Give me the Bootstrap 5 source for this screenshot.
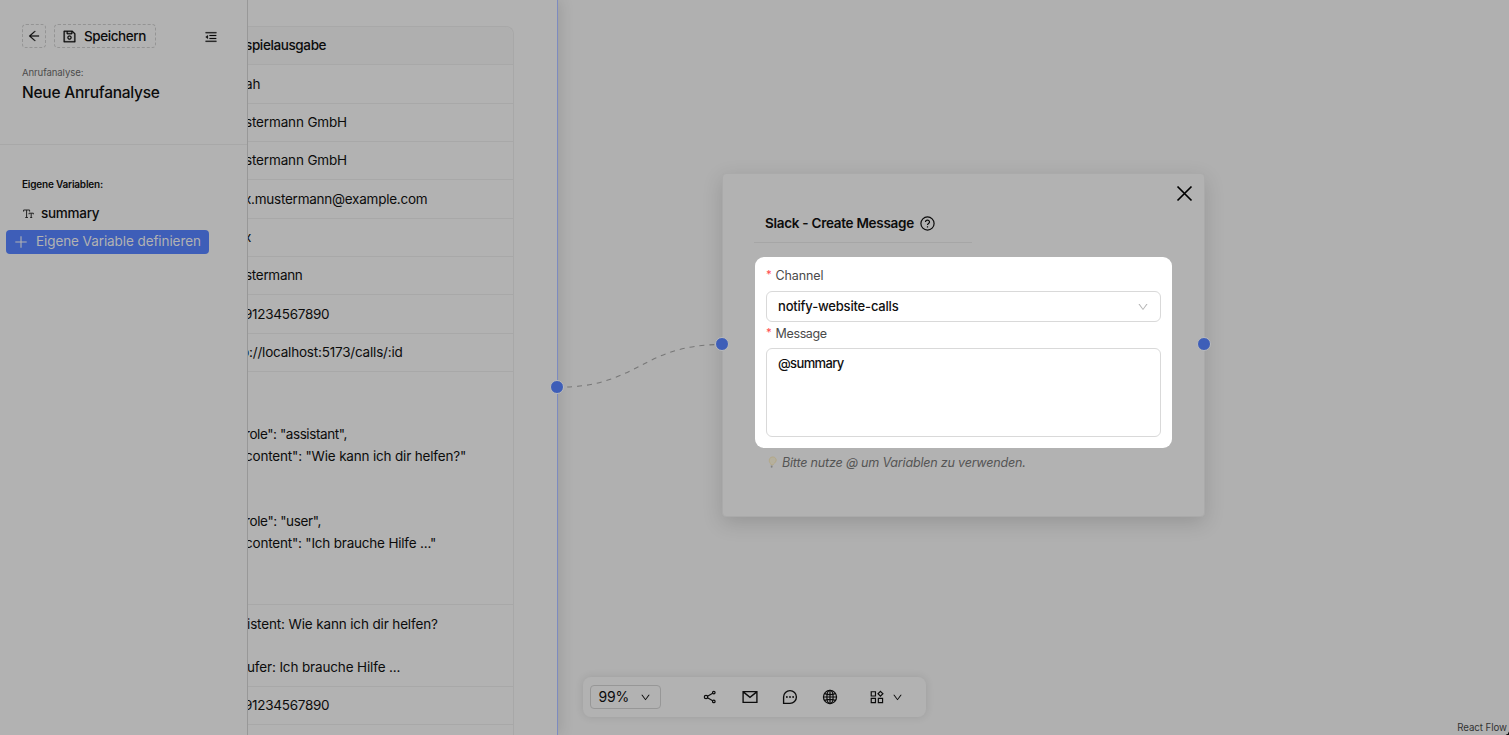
<!DOCTYPE html>
<html lang="de">
<head>
<meta charset="utf-8">
<meta name="viewport" content="width=device-width, initial-scale=1">
<title>Neue Anrufanalyse</title>
<link href="https://cdn.jsdelivr.net/npm/bootstrap@5.3.0/dist/css/bootstrap.min.css" rel="stylesheet">
<style>
body{font-family:Inter,"Open Sans",sans-serif;font-size:13.5px;line-height:21.65px;letter-spacing:-.2px;color:#0c0c0c;background:#b0b0b0;height:735px}
svg{display:block;flex:none}
.ic{fill:currentColor}
.ln{fill:none;stroke:currentColor;stroke-width:86}
/* sidebar */
.side{width:248px;background:#b2b2b2;border-right:1px solid #989898;z-index:5}
.side-top{height:145px;border-bottom:1px solid #a8a8a8;padding:24px 0 0 22px}
.btn-dash{border:1px dashed #949494;border-radius:4px;height:24px;color:#0c0c0c;font-size:13.5px;line-height:22px}
.btn-save{width:102px;padding-left:7px!important;gap:7px;font-weight:500;letter-spacing:-.42px}
.lbl-sm{font-size:9.6px;line-height:14px;color:#4c4c4c;letter-spacing:-.1px;margin-top:17.6px}
.ttl{font-size:15.5px;line-height:24px;font-weight:500;letter-spacing:-.25px;margin-top:1px}
.vars{padding:32px 0 0 6px}
.vars-h{font-size:10px;font-weight:600;line-height:14px;padding-left:16px}
.var-row{padding:12px 0 0 17px;gap:7px;font-weight:500;letter-spacing:-.28px}
.btn-def{background:#3e5eb8;color:#b2b2b2;border:0;border-radius:4px;width:203px;height:24px;font-size:13.5px;line-height:25px;letter-spacing:-.08px;padding:0 0 0 8px;margin-top:5px;gap:8px}
/* canvas */
.node-vars{left:-20px;top:0;width:330px;height:735px;background:#b2b2b2;border-right:1px solid #7d8bc0;box-shadow:2px 0 14px rgba(0,0,0,.12);padding:26px 43.5px 0 13px}
.tbl{border:1px solid #a8a8a8;border-radius:0 8px 0 0;border-left:0;border-bottom:0;height:709px}
.tbl>div{border-bottom:1px solid #a8a8a8;padding:8.4px 0 0 3px;white-space:pre;height:38.37px}
.tbl>.hd{background:#afafaf;font-weight:500;letter-spacing:-.38px;border-radius:0 8px 0 0;height:38.2px}
.tbl>.p4{padding-left:4px}
.tbl>.json{height:233px;padding-top:8.9px}.tbl>.talk{height:82px;padding:9px 0 0 6px;letter-spacing:-.14px}
.node-slack{left:474px;top:173px;width:482.5px;height:344px;background:#b2b2b2;border:1px solid #aaa;border-radius:4px;box-shadow:0 6px 20px rgba(0,0,0,.15);padding:39.500px 32px 0 32px}
.node-h{width:218px;height:29px;border-bottom:1px solid #a6a6a6;padding:0 0 8px 11px;margin-left:-1px;font-weight:600;font-size:13.5px;letter-spacing:-.28px}
.spot{background:#fff;border-radius:9px;height:191px;width:417px;margin-top:14.5px;padding:9px 11px 0}
.f-lbl{font-size:12.5px;line-height:20px;color:#4a4a4a;height:20px;letter-spacing:-.1px}
.f-lbl i{color:#ff4d4f;font-style:normal;font-size:11px;width:9.5px;display:inline-block;font-weight:500;line-height:10px;vertical-align:2px}
.inp{border:1px solid #d9d9d9;border-radius:6px;color:#0f0f0f;font-weight:500;font-size:13px;letter-spacing:-.19px;padding:0 11px}
.hint{font-size:12.6px;font-style:italic;color:#555;letter-spacing:-.22px;margin-top:4px;padding-left:12.5px;gap:5.5px}
.xbtn{right:11px;top:11px}
.dot{width:14px;height:14px;border-radius:50%;background:#3e5eb8;border:1px solid #bcbcbc}
.tools{left:334.5px;top:677px;width:343px;height:40px;border-radius:8px;background:#b2b2b2;box-shadow:0 0 8px rgba(0,0,0,.11);padding:0 24px 0 7.5px}
.zoomsel{width:71px;height:24px;border:1px solid #979797;border-radius:4px;padding:0 9px 0 7.5px;font-size:14px;flex:none}
.sep{width:1px;height:12px;background:#a3a3a3;margin:0 25.500px 0 16px}
.flow{right:2px;bottom:0;font-size:9.7px;line-height:15px;letter-spacing:-.05px;color:#333}
.cor{width:4px;height:4px;bottom:0}
</style>
</head>
<body class="d-flex overflow-hidden position-relative">
<svg width="0" height="0" class="position-absolute"><defs>
<symbol id="down" viewBox="0 0 1024 1024"><path d="M884 256h-75c-5.1 0-9.9 2.5-12.9 6.6L512 654.2 227.9 262.6c-3-4.1-7.8-6.6-12.9-6.6h-75c-6.5 0-10.3 7.4-6.5 12.7l352.6 486.1c12.8 17.6 39 17.6 51.7 0l352.6-486.1c3.9-5.3.1-12.7-6.4-12.7z"/></symbol>
</defs></svg>

<aside class="side flex-shrink-0 position-relative">
  <div class="side-top">
    <div class="d-flex align-items-center">
      <button class="btn btn-dash p-0 d-flex align-items-center justify-content-center" style="width:24px" aria-label="Zurück"><svg class="ic" width="14" height="14" viewBox="0 0 1024 1024"><path stroke="currentColor" stroke-width="14" d="M872 474H286.9l350.2-304c5.6-4.9 2.2-14-5.2-14h-88.5c-3.9 0-7.6 1.4-10.5 3.9L155 487.8a31.96 31.96 0 000 48.3L535.1 866c1.5 1.3 3.3 2 5.2 2h91.5c7.4 0 10.8-9.2 5.2-14L286.9 550H872c4.4 0 8-3.6 8-8v-60c0-4.4-3.6-8-8-8z"/></svg></button>
      <button class="btn btn-dash btn-save p-0 d-flex align-items-center ms-2"><svg class="ic" width="15" height="15" viewBox="0 0 1024 1024"><path stroke="currentColor" stroke-width="20" d="M893.3 293.3L730.7 130.7c-7.5-7.5-16.7-13-26.7-16V112H144c-17.7 0-32 14.3-32 32v736c0 17.7 14.3 32 32 32h736c17.7 0 32-14.3 32-32V338.5c0-17-6.7-33.2-18.7-45.2zM384 184h256v104H384V184zm456 656H184V184h136v136c0 17.7 14.3 32 32 32h320c17.7 0 32-14.3 32-32V205.8l136 136V840zM512 442c-79.5 0-144 64.5-144 144s64.5 144 144 144 144-64.5 144-144-64.5-144-144-144zm0 224c-44.2 0-80-35.8-80-80s35.8-80 80-80 80 35.8 80 80-35.8 80-80 80z"/></svg>Speichern</button>
      <svg class="ic" style="margin:1px 0 0 48px" width="14" height="14" viewBox="0 0 1024 1024"><path stroke="currentColor" stroke-width="14" d="M408 442h480c4.4 0 8-3.6 8-8v-56c0-4.4-3.6-8-8-8H408c-4.4 0-8 3.6-8 8v56c0 4.4 3.6 8 8 8zm-8 204c0 4.4 3.6 8 8 8h480c4.4 0 8-3.6 8-8v-56c0-4.4-3.6-8-8-8H408c-4.4 0-8 3.6-8 8v56zm504-486H120c-4.4 0-8 3.6-8 8v56c0 4.4 3.6 8 8 8h784c4.4 0 8-3.6 8-8v-56c0-4.4-3.6-8-8-8zm0 632H120c-4.4 0-8 3.6-8 8v56c0 4.4 3.6 8 8 8h784c4.4 0 8-3.6 8-8v-56c0-4.4-3.6-8-8-8zM115.4 518.9L271.7 642c5.8 4.6 14.4.5 14.4-6.9V388.9c0-7.4-8.5-11.5-14.4-6.9L115.4 505.1a8.74 8.74 0 000 13.8z"/></svg>
    </div>
    <div class="lbl-sm">Anrufanalyse:</div>
    <div class="ttl">Neue Anrufanalyse</div>
  </div>
  <div class="vars">
    <div class="vars-h">Eigene Variablen:</div>
    <div class="var-row d-flex align-items-center">
      <svg width="11" height="10" viewBox="0 0 11 10" fill="none" stroke="#222" stroke-width="1"><path d="M.6 2.6V1h6v1.6M3.6 1v7.4M2.3 8.5h2.6M6 5.3V4.2h4.4v1.1M8.2 4.2v4.2M7.2 8.5h2"/></svg>summary
    </div>
    <button class="btn btn-def d-flex align-items-center"><svg width="14" height="14" viewBox="0 0 14 14" stroke="currentColor" stroke-width="1.1"><path d="M7 1.3v11.4M1.3 7h11.4"/></svg>Eigene Variable definieren</button>
  </div>
</aside>

<main class="flex-grow-1 position-relative">
  <section class="node-vars position-absolute">
    <div class="tbl overflow-hidden">
      <div class="hd p4">spielausgabe</div>
      <div class="p4">ah</div>
      <div class="p4" style="letter-spacing:-.15px">stermann GmbH</div>
      <div class="p4" style="letter-spacing:-.15px">stermann GmbH</div>
      <div style="letter-spacing:-.25px">x.mustermann@example.com</div>
      <div>x</div>
      <div class="p4" style="letter-spacing:-.3px">stermann</div>
      <div style="letter-spacing:-.28px">91234567890</div>
      <div style="padding-left:0">p://localhost:5173/calls/:id</div>
      <div class="json p4">

<span style="letter-spacing:-.42px">role": "assistant",</span>
<span style="letter-spacing:-.18px">content": "Wie kann ich dir helfen?"</span>


<span style="letter-spacing:-.38px">role": "user",</span>
content": "Ich brauche Hilfe ..."
</div>
      <div class="talk">istent: Wie kann ich dir helfen?

ufer: Ich brauche Hilfe ...</div>
      <div style="letter-spacing:-.28px">91234567890</div>
    </div>
  </section>

  <svg class="position-absolute" style="left:309px;top:335px" width="170" height="60" fill="none" stroke="#787878" stroke-width="1.1" stroke-dasharray="5 5"><path d="M0 52.300C83 52.300 83 9.500 165.500 9.500"/></svg>

  <section class="node-slack position-absolute">
    <div class="node-h d-flex align-items-center">Slack - Create Message
      <svg style="margin-left:6px" width="15" height="15" viewBox="0 0 15 15" fill="none" stroke="currentColor" stroke-width="1.2"><circle cx="7.500" cy="7.500" r="6.600"/><path d="M5.500 6.100C5.500 3.500 9.500 3.500 9.500 6c0 1.500-2 1.500-2 3.100M7.500 10.200v1.200"/></svg></div>
    <div class="spot">
      <div class="f-lbl"><i>*</i>Channel</div>
      <div class="inp d-flex align-items-center justify-content-between" style="height:31px;margin-top:5px;padding-top:1px">notify-website-calls<svg width="12" height="12" fill="#b5b5b5"><use href="#down"/></svg></div>
      <div class="f-lbl" style="margin-top:2px;letter-spacing:-.35px"><i>*</i>Message</div>
      <div class="inp" style="height:89px;margin-top:4px;padding-top:4px;letter-spacing:-.65px">@summary</div>
    </div>
    <div class="hint d-flex align-items-center"><svg width="9" height="13" viewBox="0 0 9 13" fill="none"><path d="M3 8.700C2.500 7 .9 6.200 1.300 3.800 1.700 1.700 3.500.7 5.400 1c2 .3 3 2 2.700 3.800C7.700 6.700 5.700 7.200 5 8.900z" stroke="#b3a785" fill="#b5b09e" stroke-width=".9"/><path d="M2.800 9.500l1.900.3-.5 1.900-1.400-.3z" fill="#808080"/></svg>Bitte nutze @ um Variablen zu verwenden.</div>
    <svg class="xbtn position-absolute" width="17" height="17" viewBox="0 0 17 17" stroke="#000" stroke-width="1.700"><path d="M1.500 1.500l14 14M15.500 1.500l-14 14"/></svg>
  </section>

  <span class="dot position-absolute" style="left:302px;top:380px"></span>
  <span class="dot position-absolute" style="left:467px;top:337px"></span>
  <span class="dot position-absolute" style="left:949px;top:337px"></span>

  <div class="tools position-absolute d-flex align-items-center">
    <div class="zoomsel d-flex align-items-center justify-content-between">99%<svg class="ic" width="11" height="11"><use href="#down"/></svg></div>
    <span class="sep"></span>
    <svg class="ln" width="14" height="14" viewBox="0 0 1024 1024"><circle cx="220" cy="512" r="125"/><circle cx="790" cy="190" r="95"/><circle cx="790" cy="834" r="95"/><path d="M330 450l380-215M330 574l380 215"/></svg>
    <svg class="ln" style="margin-left:25px" width="16" height="16" viewBox="0 0 1024 1024"><path d="M70 168h884v688H70zM100 200l412 330 412-330"/></svg>
    <svg class="ln" style="margin-left:24px" width="16" height="16" viewBox="0 0 1024 1024"><path d="M102 922V512A410 410 0 1 1 512 922z"/><g fill="currentColor" stroke="none"><circle cx="312" cy="512" r="58"/><circle cx="512" cy="512" r="58"/><circle cx="712" cy="512" r="58"/></g></svg>
    <svg class="ln" style="margin-left:24px;stroke-width:78" width="16" height="16" viewBox="0 0 1024 1024"><circle cx="512" cy="512" r="420"/><path d="M92 512h840M512 92v840M170 300q342 120 684 0M170 724q342-120 684 0"/><ellipse cx="512" cy="512" rx="200" ry="420"/></svg>
    <svg class="ln" style="margin-left:32px" width="14" height="14" viewBox="0 0 1024 1024"><path d="M90 130h310v310H90zM90 610h310v310H90zM610 610h310v310H610zM765 95l180 180-180 180-180-180z"/></svg>
    <svg class="ic" style="margin-left:8px" width="11" height="11"><use href="#down"/></svg>
  </div>
  <div class="flow position-absolute">React Flow</div>
</main>
<span class="cor position-absolute start-0" style="background:radial-gradient(circle at 100% 0,transparent 3.500px,#111 4px)"></span>
<span class="cor position-absolute end-0" style="background:radial-gradient(circle at 0 0,transparent 3.500px,#111 4px)"></span>
<script src="https://cdn.jsdelivr.net/npm/bootstrap@5.3.0/dist/js/bootstrap.bundle.min.js"></script>
</body>
</html>
